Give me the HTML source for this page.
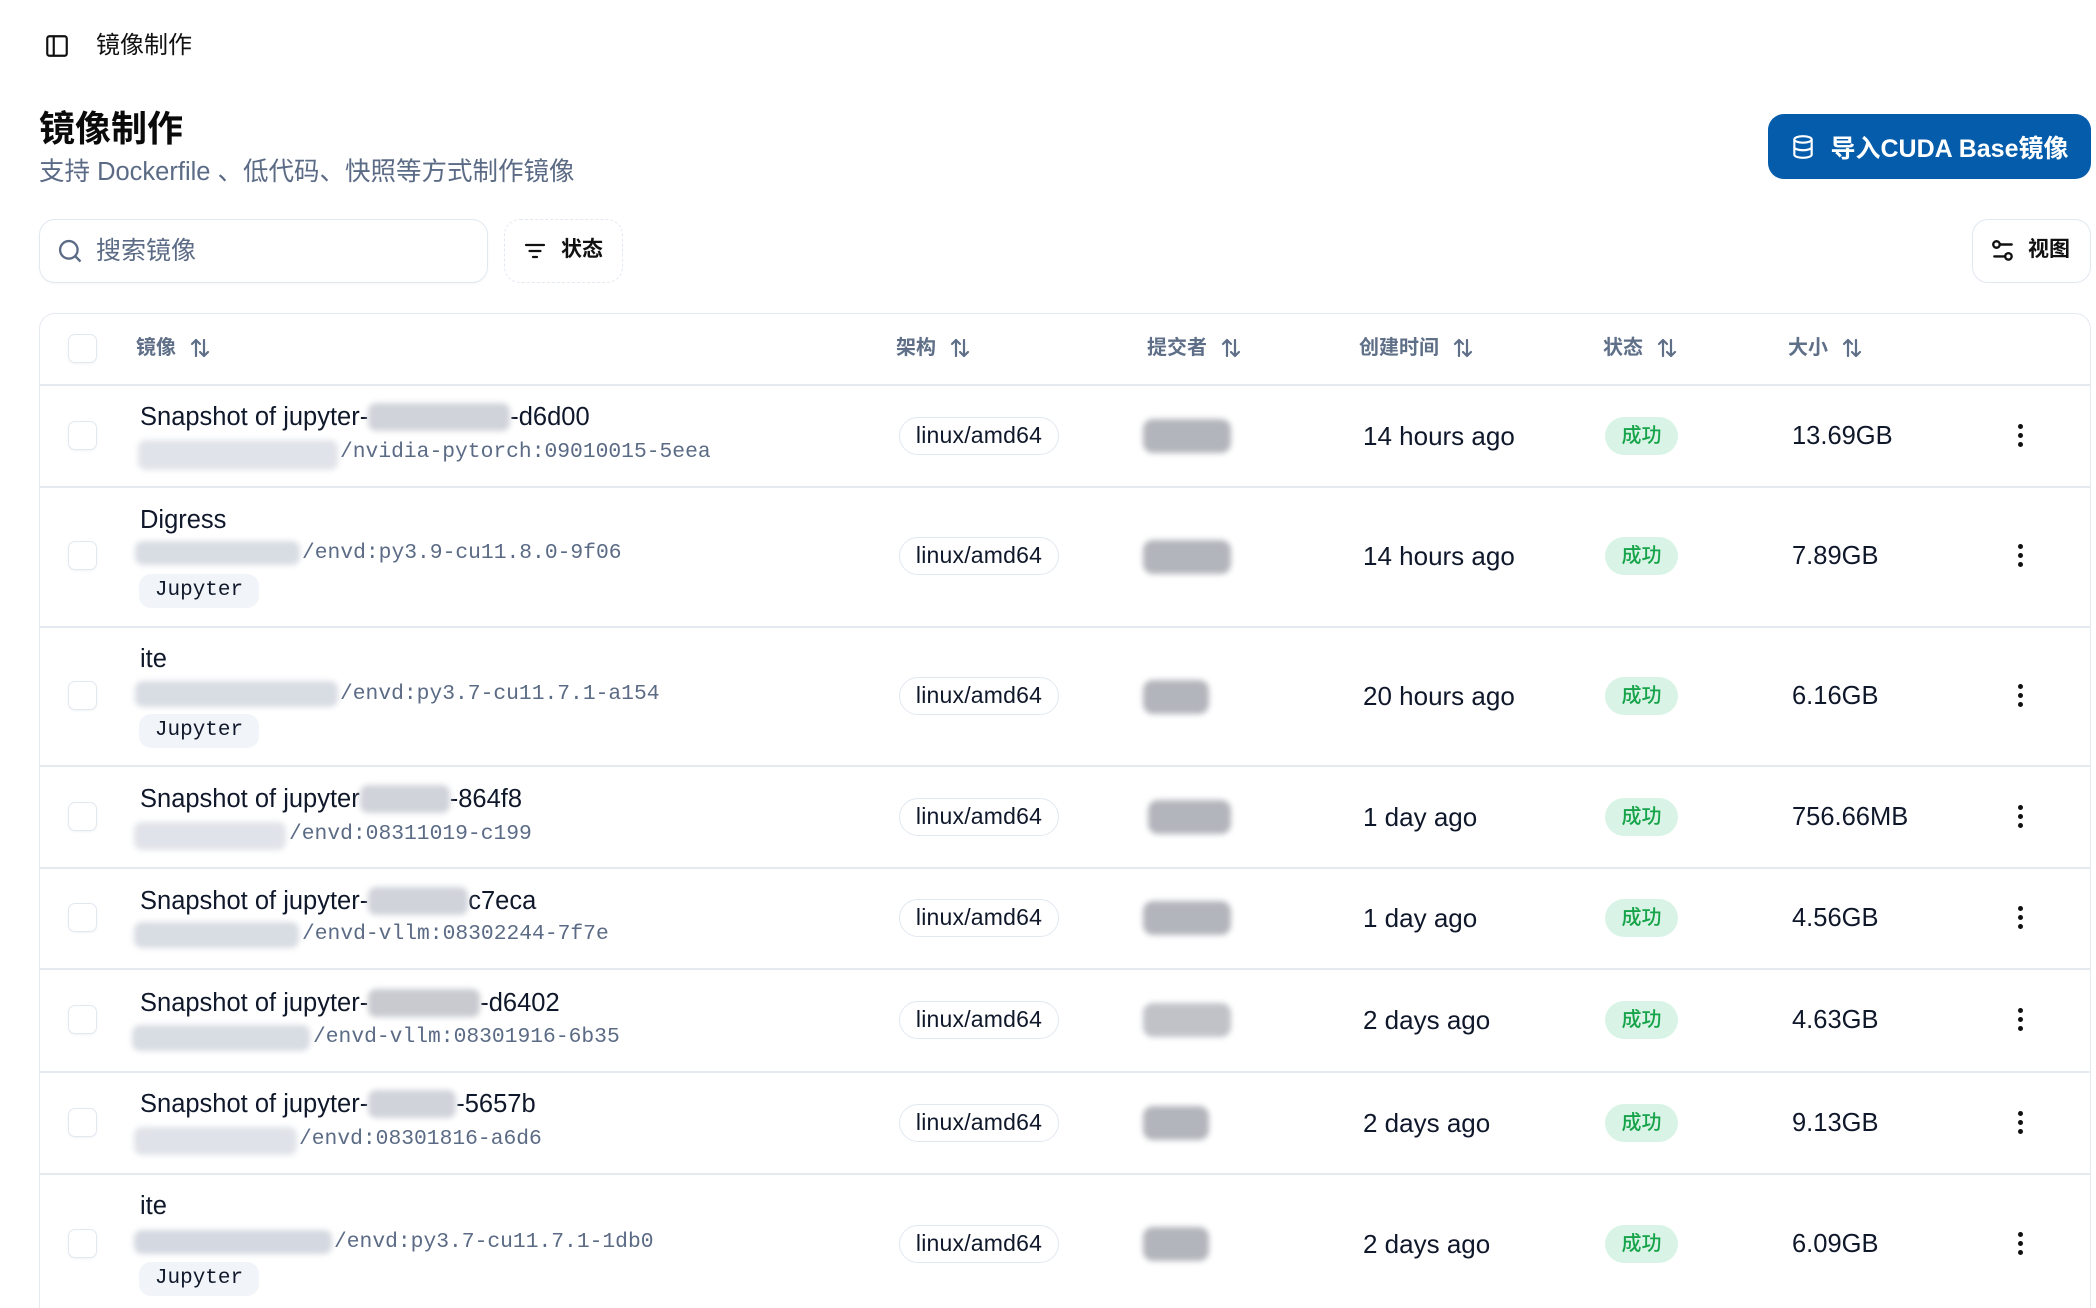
<!DOCTYPE html>
<html><head><meta charset="utf-8">
<style>
*{box-sizing:border-box;margin:0;padding:0}
html{height:1308px;overflow:hidden}
body{width:2096px;height:1308px;overflow:hidden;background:#fff;font-family:"Liberation Sans","Noto Sans CJK SC",sans-serif;color:#0f172a;position:relative}
.a{position:absolute;white-space:nowrap}
.hd{font-size:20px;font-weight:700;color:#5f6f88;line-height:30px;top:333px;display:flex;align-items:center;gap:12px}
.cb{position:absolute;left:68px;width:29px;height:29px;border:1.5px solid #e2e8f0;border-radius:7px;box-shadow:0 1px 2px rgba(0,0,0,.05)}
.nm{font-size:25.5px;line-height:30px;color:#0f172a;display:flex;align-items:center}
.nm b{display:inline-block;height:28px;background:#d0d3da;filter:blur(3px);border-radius:8px;font-weight:normal}
.pt{font-family:"Liberation Mono",monospace;font-size:21.3px;line-height:28px;color:#5b6b85}
.bl{position:absolute;background:#d4d7de;filter:blur(3px);border-radius:8px}
.tag{position:absolute;left:139px;height:34px;width:120px;background:#f1f4f9;border-radius:12px;font-family:"Liberation Mono",monospace;font-size:21px;line-height:34px;text-align:center;color:#0f172a}
.pill{position:absolute;left:899px;width:160px;height:38px;border:1.5px solid #e2e8f0;border-radius:19px;font-size:23px;font-weight:500;line-height:35px;text-align:center;color:#0f172a;letter-spacing:.2px}
.av{position:absolute;left:1143px;width:88px;height:34px;background:#b3b5bc;filter:blur(3px);border-radius:10px}
.tm{position:absolute;left:1363px;font-size:26px;line-height:30px;color:#0f172a}
.ok{position:absolute;left:1605px;width:73px;height:38px;border-radius:19px;background:#d9f4e6;color:#16a34a;font-size:20px;line-height:38px;text-align:center;font-weight:500}
.sz{position:absolute;left:1792px;font-size:25.5px;line-height:30px;color:#0f172a}
.dots{position:absolute;left:2018px;width:6px}
.dots i{display:block;width:5px;height:5px;border-radius:50%;background:#111;margin-bottom:4px}
.ln{position:absolute;left:39px;width:2052px;height:1.5px;background:#e5e9f0}
</style></head><body>

<svg class="a" style="left:44px;top:33px" width="26" height="26" viewBox="0 0 24 24" fill="none" stroke="#111" stroke-width="2"><rect x="3" y="3" width="18" height="18" rx="2"/><line x1="9" y1="3" x2="9" y2="21"/></svg>
<div class="a" style="left:96px;top:29px;font-size:24px;line-height:34px;color:#111">镜像制作</div>

<div class="a" style="left:39px;top:106px;font-size:36px;font-weight:700;line-height:46px;color:#0a0a0a">镜像制作</div>
<div class="a" style="left:39px;top:156px;font-size:25.5px;line-height:32px;color:#5b6b85">支持 Dockerfile 、低代码、快照等方式制作镜像</div>

<div class="a" style="left:1768px;top:114px;width:323px;height:65px;background:#045cab;border-radius:16px;color:#fff;font-size:25px;font-weight:700;display:flex;align-items:center;justify-content:center;gap:14px">
<svg width="26" height="28" viewBox="0 0 24 24" fill="none" stroke="#fff" stroke-width="2"><ellipse cx="12" cy="5" rx="8" ry="3"/><path d="M4 5v14c0 1.7 3.6 3 8 3s8-1.3 8-3V5"/><path d="M4 12c0 1.7 3.6 3 8 3s8-1.3 8-3"/></svg>
<span>导入CUDA Base镜像</span></div>

<div class="a" style="left:39px;top:219px;width:449px;height:64px;border:1.5px solid #e2e8f0;border-radius:16px;box-shadow:0 1px 2px rgba(0,0,0,.04)"></div>
<svg class="a" style="left:56px;top:237px" width="28" height="28" viewBox="0 0 24 24" fill="none" stroke="#5b6b85" stroke-width="2"><circle cx="11" cy="11" r="7.5"/><line x1="16.5" y1="16.5" x2="21" y2="21"/></svg>
<div class="a" style="left:96px;top:234px;font-size:25px;line-height:34px;color:#5b6b85">搜索镜像</div>

<div class="a" style="left:504px;top:219px;width:119px;height:64px;border:1.5px dashed #e2e8f0;border-radius:16px"></div>
<svg class="a" style="left:522px;top:239px" width="26" height="24" viewBox="0 0 24 24" fill="none" stroke="#111" stroke-width="2.2" stroke-linecap="round"><line x1="3" y1="6" x2="21" y2="6"/><line x1="6.5" y1="12" x2="17.5" y2="12"/><line x1="10" y1="18" x2="14" y2="18"/></svg>
<div class="a" style="left:561px;top:235px;font-size:21px;font-weight:700;line-height:30px;color:#111">状态</div>

<div class="a" style="left:1972px;top:219px;width:119px;height:64px;border:1.5px solid #e2e8f0;border-radius:16px"></div>
<svg class="a" style="left:1990px;top:238px" width="26" height="26" viewBox="0 0 24 24" fill="none" stroke="#111" stroke-width="2.2" stroke-linecap="round"><circle cx="6" cy="6" r="3"/><line x1="9" y1="6" x2="20" y2="6"/><circle cx="17" cy="17" r="3"/><line x1="4" y1="17" x2="14" y2="17"/></svg>
<div class="a" style="left:2028px;top:235px;font-size:21px;font-weight:700;line-height:30px;color:#111">视图</div>

<div class="a" style="left:39px;top:313px;width:2052px;height:1020px;border:1.5px solid #e5e9f0;border-radius:16px"></div>
<div class="cb" style="top:334px"></div>
<div class="a hd" style="left:136px">镜像 <svg width="24" height="24" viewBox="0 0 24 24" fill="none" stroke="#5f6f88" stroke-width="2.2" stroke-linecap="round" stroke-linejoin="round"><path d="M8 20V4M4 8l4-4 4 4M16 4v16M12 16l4 4 4-4"/></svg></div>
<div class="a hd" style="left:896px">架构 <svg width="24" height="24" viewBox="0 0 24 24" fill="none" stroke="#5f6f88" stroke-width="2.2" stroke-linecap="round" stroke-linejoin="round"><path d="M8 20V4M4 8l4-4 4 4M16 4v16M12 16l4 4 4-4"/></svg></div>
<div class="a hd" style="left:1147px">提交者 <svg width="24" height="24" viewBox="0 0 24 24" fill="none" stroke="#5f6f88" stroke-width="2.2" stroke-linecap="round" stroke-linejoin="round"><path d="M8 20V4M4 8l4-4 4 4M16 4v16M12 16l4 4 4-4"/></svg></div>
<div class="a hd" style="left:1359px">创建时间 <svg width="24" height="24" viewBox="0 0 24 24" fill="none" stroke="#5f6f88" stroke-width="2.2" stroke-linecap="round" stroke-linejoin="round"><path d="M8 20V4M4 8l4-4 4 4M16 4v16M12 16l4 4 4-4"/></svg></div>
<div class="a hd" style="left:1603px">状态 <svg width="24" height="24" viewBox="0 0 24 24" fill="none" stroke="#5f6f88" stroke-width="2.2" stroke-linecap="round" stroke-linejoin="round"><path d="M8 20V4M4 8l4-4 4 4M16 4v16M12 16l4 4 4-4"/></svg></div>
<div class="a hd" style="left:1788px">大小 <svg width="24" height="24" viewBox="0 0 24 24" fill="none" stroke="#5f6f88" stroke-width="2.2" stroke-linecap="round" stroke-linejoin="round"><path d="M8 20V4M4 8l4-4 4 4M16 4v16M12 16l4 4 4-4"/></svg></div>

<div class="ln" style="top:384px"></div>
<div class="ln" style="top:486px"></div>
<div class="ln" style="top:626px"></div>
<div class="ln" style="top:765px"></div>
<div class="ln" style="top:867px"></div>
<div class="ln" style="top:968px"></div>
<div class="ln" style="top:1071px"></div>
<div class="ln" style="top:1173px"></div>

<!-- row 1 -->
<div class="cb" style="top:421px"></div>
<div class="a nm" style="left:140px;top:402px">Snapshot of jupyter-<b style="width:142px"></b>-d6d00</div>
<div class="bl" style="left:138px;top:440px;width:200px;height:30px;background:#e0e3e9"></div>
<div class="a pt" style="left:340px;top:438px">/nvidia-pytorch:09010015-5eea</div>
<div class="pill" style="top:417px">linux/amd64</div>
<div class="av" style="top:419px"></div>
<div class="tm" style="top:421px">14 hours ago</div>
<div class="ok" style="top:417px">成功</div>
<div class="sz" style="top:421px">13.69GB</div>
<div class="dots" style="top:424px"><i></i><i></i><i></i></div>

<!-- row 2 -->
<div class="cb" style="top:541px"></div>
<div class="a nm" style="left:140px;top:505px">Digress</div>
<div class="bl" style="left:135px;top:541px;width:165px;height:24px;background:#d8dce3"></div>
<div class="a pt" style="left:302px;top:539px">/envd:py3.9-cu11.8.0-9f06</div>
<div class="tag" style="top:574px">Jupyter</div>
<div class="pill" style="top:537px">linux/amd64</div>
<div class="av" style="top:540px"></div>
<div class="tm" style="top:541px">14 hours ago</div>
<div class="ok" style="top:537px">成功</div>
<div class="sz" style="top:541px">7.89GB</div>
<div class="dots" style="top:544px"><i></i><i></i><i></i></div>

<!-- row 3 -->
<div class="cb" style="top:681px"></div>
<div class="a nm" style="left:140px;top:644px">ite</div>
<div class="bl" style="left:135px;top:681px;width:203px;height:26px;background:#d8dce3"></div>
<div class="a pt" style="left:340px;top:680px">/envd:py3.7-cu11.7.1-a154</div>
<div class="tag" style="top:714px">Jupyter</div>
<div class="pill" style="top:677px">linux/amd64</div>
<div class="av" style="left:1143px;width:66px;top:680px"></div>
<div class="tm" style="top:681px">20 hours ago</div>
<div class="ok" style="top:677px">成功</div>
<div class="sz" style="top:681px">6.16GB</div>
<div class="dots" style="top:684px"><i></i><i></i><i></i></div>

<!-- row 4 -->
<div class="cb" style="top:802px"></div>
<div class="a nm" style="left:140px;top:784px">Snapshot of jupyter<b style="width:90px"></b>-864f8</div>
<div class="bl" style="left:134px;top:822px;width:152px;height:28px;background:#e0e3e9"></div>
<div class="a pt" style="left:289px;top:820px">/envd:08311019-c199</div>
<div class="pill" style="top:798px">linux/amd64</div>
<div class="av" style="left:1148px;width:83px;top:800px"></div>
<div class="tm" style="top:802px">1 day ago</div>
<div class="ok" style="top:798px">成功</div>
<div class="sz" style="top:802px">756.66MB</div>
<div class="dots" style="top:805px"><i></i><i></i><i></i></div>

<!-- row 5 -->
<div class="cb" style="top:903px"></div>
<div class="a nm" style="left:140px;top:886px">Snapshot of jupyter-<b style="width:100px"></b>c7eca</div>
<div class="bl" style="left:134px;top:922px;width:165px;height:26px;background:#d8dce3"></div>
<div class="a pt" style="left:302px;top:920px">/envd-vllm:08302244-7f7e</div>
<div class="pill" style="top:899px">linux/amd64</div>
<div class="av" style="top:901px"></div>
<div class="tm" style="top:903px">1 day ago</div>
<div class="ok" style="top:899px">成功</div>
<div class="sz" style="top:903px">4.56GB</div>
<div class="dots" style="top:906px"><i></i><i></i><i></i></div>

<!-- row 6 -->
<div class="cb" style="top:1005px"></div>
<div class="a nm" style="left:140px;top:988px">Snapshot of jupyter-<b style="width:112px;background:#c8cad0"></b>-d6402</div>
<div class="bl" style="left:132px;top:1025px;width:178px;height:26px;background:#d8dce3"></div>
<div class="a pt" style="left:313px;top:1023px">/envd-vllm:08301916-6b35</div>
<div class="pill" style="top:1001px">linux/amd64</div>
<div class="av" style="top:1003px;background:#c0c2c8"></div>
<div class="tm" style="top:1005px">2 days ago</div>
<div class="ok" style="top:1001px">成功</div>
<div class="sz" style="top:1005px">4.63GB</div>
<div class="dots" style="top:1008px"><i></i><i></i><i></i></div>

<!-- row 7 -->
<div class="cb" style="top:1108px"></div>
<div class="a nm" style="left:140px;top:1089px">Snapshot of jupyter-<b style="width:88px"></b>-5657b</div>
<div class="bl" style="left:134px;top:1127px;width:163px;height:28px;background:#dfe2e8"></div>
<div class="a pt" style="left:299px;top:1125px">/envd:08301816-a6d6</div>
<div class="pill" style="top:1104px">linux/amd64</div>
<div class="av" style="left:1143px;width:66px;top:1106px"></div>
<div class="tm" style="top:1108px">2 days ago</div>
<div class="ok" style="top:1104px">成功</div>
<div class="sz" style="top:1108px">9.13GB</div>
<div class="dots" style="top:1111px"><i></i><i></i><i></i></div>

<!-- row 8 -->
<div class="cb" style="top:1229px"></div>
<div class="a nm" style="left:140px;top:1191px">ite</div>
<div class="bl" style="left:134px;top:1230px;width:198px;height:24px;background:#d4d8e0"></div>
<div class="a pt" style="left:334px;top:1228px">/envd:py3.7-cu11.7.1-1db0</div>
<div class="tag" style="top:1262px">Jupyter</div>
<div class="pill" style="top:1225px">linux/amd64</div>
<div class="av" style="left:1143px;width:66px;top:1227px"></div>
<div class="tm" style="top:1229px">2 days ago</div>
<div class="ok" style="top:1225px">成功</div>
<div class="sz" style="top:1229px">6.09GB</div>
<div class="dots" style="top:1232px"><i></i><i></i><i></i></div>

</body></html>
